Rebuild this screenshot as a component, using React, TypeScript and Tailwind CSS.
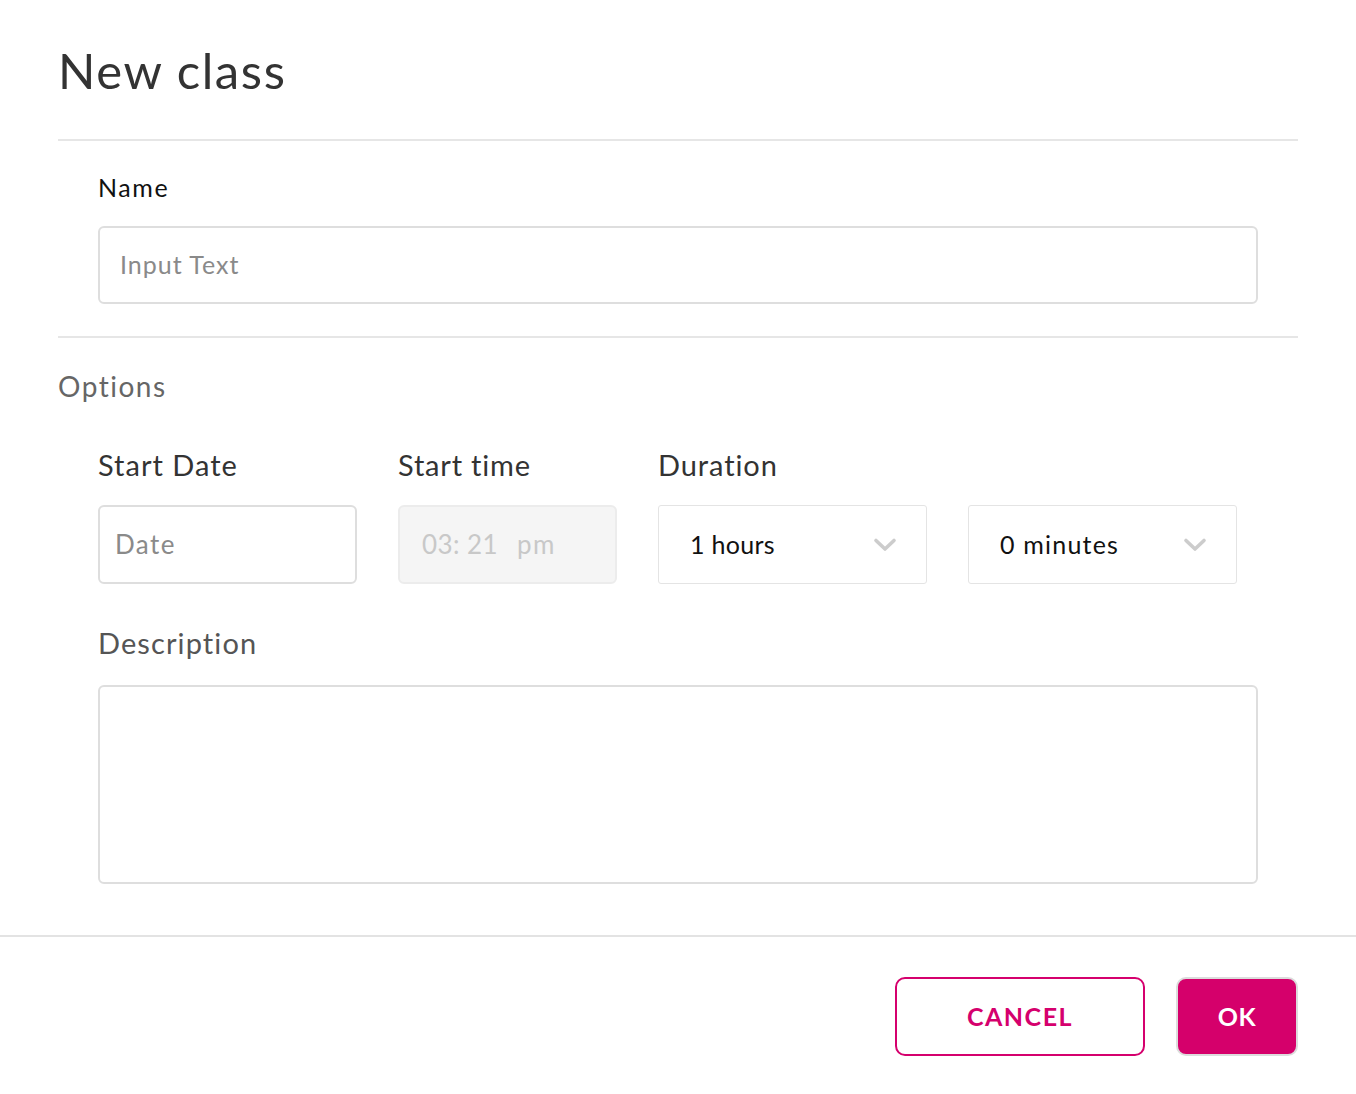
import React from "react";

function Chevron() {
  return (
    <svg width="24" height="16" viewBox="0 0 24 16" fill="none">
      <path d="M3 3.5 L12 12 L21 3.5" stroke="#cccccc" strokeWidth="3.6" strokeLinecap="round" strokeLinejoin="round" />
    </svg>
  );
}

export default function App() {
  return (
    <div className="w-[1356px] min-h-[1094px] bg-white font-['Lato','Open_Sans',sans-serif]">
      <div className="px-[58px]">
        <h1 className="pt-[40px] text-[49px] leading-[60px] font-normal text-[#333] tracking-[1.6px]">New class</h1>
        <div className="mt-[39px] h-[2px] bg-[#e6e6e6]" />
        <div className="px-[40px]">
          <div className="pt-[31px] text-[25px] leading-[30px] text-[#111] tracking-[1.6px]">Name</div>
          <div className="mt-[24px] h-[78px] rounded-[6px] border-2 border-[#dedede] flex items-center px-[20px] text-[25px] text-[#8a8a8a] tracking-[1px]">
            Input Text
          </div>
        </div>
        <div className="mt-[32px] h-[2px] bg-[#e6e6e6]" />
        <div className="mt-[30px] text-[28px] leading-[36px] text-[#666] tracking-[1.5px]">Options</div>
        <div className="px-[40px]">
          <div className="mt-[43px] flex gap-[41px]">
            <div className="w-[259px] flex flex-col">
              <div className="text-[29px] leading-[36px] text-[#333] tracking-[1px]">Start Date</div>
              <div className="mt-[22px] h-[79px] rounded-[6px] border-2 border-[#dedede] flex items-center px-[15px] text-[26px] text-[#8a8a8a] tracking-[1.4px]">
                Date
              </div>
            </div>
            <div className="w-[219px] flex flex-col">
              <div className="text-[29px] leading-[36px] text-[#333] tracking-[0.8px]">Start time</div>
              <div className="mt-[22px] h-[79px] rounded-[6px] border-2 border-[#ececec] bg-[#f5f5f5] flex items-center px-[22px] text-[26px] text-[#c8c8c8]">
                <span className="tracking-[0.4px]">03: 21</span>
                <span className="ml-[19px] tracking-[1.5px]">pm</span>
              </div>
            </div>
            <div className="w-[269px] flex flex-col">
              <div className="text-[29px] leading-[36px] text-[#333] tracking-[0.9px]">Duration</div>
              <div className="mt-[22px] h-[79px] rounded-[3px] border border-[#e4e4e4] flex items-center justify-between pl-[31px] pr-[29px] text-[25px] text-[#111]">
                <span className="tracking-[0.3px]">1 hours</span>
                <Chevron />
              </div>
            </div>
            <div className="w-[269px] flex flex-col">
              <div className="text-[29px] leading-[36px] text-transparent select-none">&nbsp;</div>
              <div className="mt-[22px] h-[79px] rounded-[3px] border border-[#e4e4e4] flex items-center justify-between pl-[31px] pr-[29px] text-[25px] text-[#111]">
                <span className="tracking-[1.2px]">0 minutes</span>
                <Chevron />
              </div>
            </div>
          </div>
          <div className="mt-[41px] text-[29px] leading-[36px] text-[#555] tracking-[1.1px]">Description</div>
          <div className="mt-[24px] h-[199px] rounded-[6px] border-2 border-[#dedede]" />
        </div>
      </div>
      <div className="mt-[51px] h-[2px] bg-[#e3e3e3]" />
      <div className="px-[58px] pt-[40px] flex justify-end gap-[31px]">
        <button className="w-[250px] h-[79px] rounded-[10px] border-2 border-[#d5006d] bg-white text-[#d5006d] text-[25px] font-bold tracking-[1.5px]">
          CANCEL
        </button>
        <button className="w-[122px] h-[79px] rounded-[10px] border-2 border-[#dcdcdc] bg-[#d5006b] text-white text-[25px] font-bold tracking-[0.5px]">
          OK
        </button>
      </div>
    </div>
  );
}
